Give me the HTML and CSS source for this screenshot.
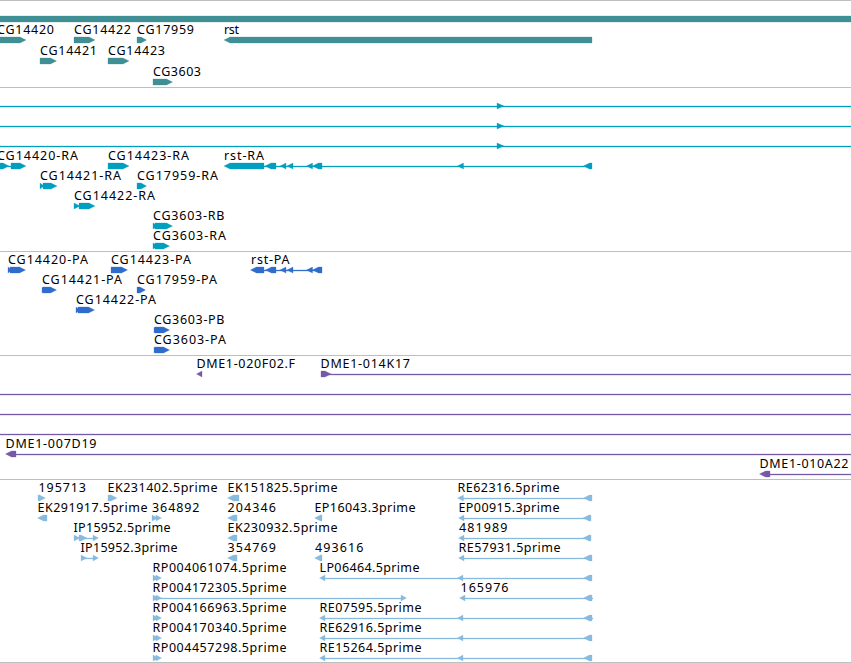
FILE: index.html
```html
<!DOCTYPE html>
<html lang="en">
<head>
    <meta charset="UTF-8">
    <meta name="viewport" content="width=device-width, initial-scale=1.0">
    <title>Genome Tracks</title>
    <link rel="stylesheet" href="styles.css">
</head>
<body>
    <main class="browser">
        <!-- Genes -->
        <section class="track genes">
            <svg width="851" height="86" viewBox="0 1 851 86">
                <path d="M0 16h851v6h-851z"/>
                <g transform="translate(0 37)">
                    <text x="-3" y="-3" textLength="57">CG14420</text>
                    <path d="M-5 0h25l6 3-6 3h-25z"/>
                    <text x="74" y="-3" textLength="57">CG14422</text>
                    <path d="M74 0h15l6 3-6 3h-15z"/>
                    <text x="137" y="-3" textLength="57">CG17959</text>
                    <path d="M137 0h4l5.500 3-5.500 3h-4z"/>
                    <text x="224" y="-3" textLength="15">rst</text>
                    <path d="M224 3l6-3h362v6h-362z"/>
                </g>
                <g transform="translate(0 58)">
                    <text x="40" y="-3" textLength="57">CG14421</text>
                    <path d="M40 0h10.500l6 3-6 3h-10.500z"/>
                    <text x="108" y="-3" textLength="57">CG14423</text>
                    <path d="M108 0h15l6 3-6 3h-15z"/>
                </g>
                <g transform="translate(0 79)">
                    <text x="153" y="-3" textLength="48">CG3603</text>
                    <path d="M153 0h13.500l6 3-6 3h-13.500z"/>
                </g>
            </svg>
        </section>

        <!-- Transcripts -->
        <section class="track transcripts">
            <svg width="851" height="163" viewBox="0 88 851 163">
                <path d="M0 106h851v1h-851zM497 103l7 3-7 3z"/>
                <path d="M0 126h851v1h-851zM497 123l7 3-7 3z"/>
                <path d="M0 146h851v1h-851zM497 143l7 3-7 3z"/>
                <g transform="translate(0 163)">
                    <text x="-3" y="-3" textLength="81">CG14420-RA</text>
                    <path d="M-5 0h8l6 3-6 3h-8zM8 3h4v1h-4zM11 0h9l6 3-6 3h-9z"/>
                    <text x="108" y="-3" textLength="81">CG14423-RA</text>
                    <path d="M108 0h15l6 3-6 3h-15z"/>
                    <text x="224" y="-3" textLength="40">rst-RA</text>
                    <path d="M224 3l6-3h34v6h-34zM265 3l6-3h5v6h-5zM280 3l6-3v6zM287 3l6-3v6zM306.500 3l6-3v6zM312.500 3l6-3h3.500v6h-3.500zM457.500 3l6-3v6zM583.500 3l6-3h2.500v6h-2.500zM264 3h326v1h-326z"/>
                </g>
                <g transform="translate(0 183)">
                    <text x="40" y="-3" textLength="81">CG14421-RA</text>
                    <path d="M40 0l4 3-4 3zM43 0h8l6 3-6 3h-8z"/>
                    <text x="137" y="-3" textLength="81">CG17959-RA</text>
                    <path d="M137 0h4l5.500 3-5.500 3h-4z"/>
                </g>
                <g transform="translate(0 203)">
                    <text x="74" y="-3" textLength="81">CG14422-RA</text>
                    <path d="M74 0l6 3-6 3zM79 0h10l6 3-6 3h-10z"/>
                </g>
                <g transform="translate(0 223)">
                    <text x="153" y="-3" textLength="71.500">CG3603-RB</text>
                    <path d="M153 0l5 3-5 3zM155 0h11.500l6 3-6 3h-11.500z"/>
                </g>
                <g transform="translate(0 243)">
                    <text x="153" y="-3" textLength="73">CG3603-RA</text>
                    <path d="M153 0l5 3-5 3zM155 0h8.500l6 3-6 3h-8.500z"/>
                </g>
            </svg>
        </section>

        <!-- Coding regions -->
        <section class="track proteins">
            <svg width="851" height="103" viewBox="0 252 851 103">
                <g transform="translate(0 267)">
                    <text x="8" y="-3" textLength="80">CG14420-PA</text>
                    <path d="M8 0l4 3-4 3zM10 0h9.500l6 3-6 3h-9.500z"/>
                    <text x="111" y="-3" textLength="80">CG14423-PA</text>
                    <path d="M111 0h10.500l6 3-6 3h-10.500z"/>
                    <text x="251" y="-3" textLength="38.500">rst-PA</text>
                    <path d="M250.500 3l6-3h7.500v6h-7.500zM265.500 3l6-3h4.500v6h-4.500zM280 3l6-3v6zM287 3l6-3v6zM306.500 3l6-3v6zM312.500 3l6-3h3.500v6h-3.500zM264 3h56v1h-56z"/>
                </g>
                <g transform="translate(0 287)">
                    <text x="42" y="-3" textLength="80">CG14421-PA</text>
                    <path d="M42 0l4 3-4 3zM43 0h7.500l6 3-6 3h-7.500z"/>
                    <text x="137" y="-3" textLength="80">CG17959-PA</text>
                    <path d="M137 0h3l5.500 3-5.500 3h-3z"/>
                </g>
                <g transform="translate(0 307)">
                    <text x="76" y="-3" textLength="80">CG14422-PA</text>
                    <path d="M76 0l4 3-4 3zM78 0h10.500l6 3-6 3h-10.500z"/>
                </g>
                <g transform="translate(0 327)">
                    <text x="154" y="-3" textLength="70.500">CG3603-PB</text>
                    <path d="M154 0l4 3-4 3zM155 0h8.500l6 3-6 3h-8.500z"/>
                </g>
                <g transform="translate(0 347)">
                    <text x="154" y="-3" textLength="72">CG3603-PA</text>
                    <path d="M154 0l4 3-4 3zM155 0h8.500l6 3-6 3h-8.500z"/>
                </g>
            </svg>
        </section>

        <!-- Insertions -->
        <section class="track insertions">
            <svg width="851" height="123" viewBox="0 356 851 123">
                <g transform="translate(0 371)">
                    <text x="196.500" y="-3" textLength="98.500">DME1-020F02.F</text>
                    <path d="M196.500 3l5.500-3v6z"/>
                    <text x="320.500" y="-3" textLength="89.500">DME1-014K17</text>
                    <path d="M321 0h4l6 3-6 3h-4zM325 3h526v1h-526z"/>
                </g>
                <path d="M0 394h851v1h-851zM0 414h851v1h-851zM0 434h851v1h-851z"/>
                <g transform="translate(0 451)">
                    <text x="5.500" y="-3" textLength="91">DME1-007D19</text>
                    <path d="M5.500 3l6-3h4.500v6h-4.500zM12 3h839v1h-839z"/>
                </g>
                <g transform="translate(0 471)">
                    <text x="759.500" y="-3" textLength="89">DME1-010A22</text>
                    <path d="M759.500 3l6-3h4.500v6h-4.500zM766 3h85v1h-85z"/>
                </g>
            </svg>
        </section>

        <!-- ESTs -->
        <section class="track ests">
            <svg width="851" height="182" viewBox="0 480 851 182">
                <g transform="translate(0 495)">
                    <text x="38.500" y="-3" textLength="47.500">195713</text>
                    <path d="M38 0h1.500l6 3-6 3h-1.500z"/>
                    <text x="107.500" y="-3" textLength="110">EK231402.5prime</text>
                    <path d="M108 0h3l6 3-6 3h-3z"/>
                    <text x="227.500" y="-3" textLength="110">EK151825.5prime</text>
                    <path d="M227.500 3l6-3h5.500v6h-5.500z"/>
                    <text x="457.500" y="-3" textLength="102">RE62316.5prime</text>
                    <path d="M457.500 3l6-3v6zM462 3h124v1h-124zM583.500 3l6-3h2.500v6h-2.500z"/>
                </g>
                <g transform="translate(0 515)">
                    <text x="37.500" y="-3" textLength="110">EK291917.5prime</text>
                    <path d="M37.500 3l6-3h3.500v6h-3.500z"/>
                    <text x="152" y="-3" textLength="47.500">364892</text>
                    <path d="M152 0l6 3-6 3zM156 0l5.500 3-5.500 3z"/>
                    <text x="227.500" y="-3" textLength="48.500">204346</text>
                    <path d="M227.500 3l6-3h3.500v6h-3.500z"/>
                    <text x="314.500" y="-3" textLength="101">EP16043.3prime</text>
                    <path d="M314.500 3l6-3h1.500v6h-1.500z"/>
                    <text x="458.500" y="-3" textLength="101">EP00915.3prime</text>
                    <path d="M458.500 3l5.500-3v6zM462 3h124v1h-124zM583 3l6-3h2v6h-2z"/>
                </g>
                <g transform="translate(0 535)">
                    <text x="73.500" y="-3" textLength="97">IP15952.5prime</text>
                    <path d="M74 0l6 3-6 3zM79 0h2l6 3-6 3h-2zM82 3h14v1h-14zM93 0l5.500 3-5.500 3z"/>
                    <text x="227.500" y="-3" textLength="110">EK230932.5prime</text>
                    <path d="M227.500 3l6-3h3.500v6h-3.500z"/>
                    <text x="459" y="-3" textLength="48.500">481989</text>
                    <path d="M458.500 3l5.500-3v6zM462 3h124v1h-124zM583 3l6-3h2v6h-2z"/>
                </g>
                <g transform="translate(0 555)">
                    <text x="80.500" y="-3" textLength="97">IP15952.3prime</text>
                    <path d="M81 0l6 3-6 3zM84 3h12v1h-12zM93 0l5.500 3-5.500 3z"/>
                    <text x="227.500" y="-3" textLength="48.500">354769</text>
                    <path d="M227.500 3l6-3h3.500v6h-3.500z"/>
                    <text x="315" y="-3" textLength="48.500">493616</text>
                    <path d="M314.500 3l6-3h1.500v6h-1.500z"/>
                    <text x="458.500" y="-3" textLength="102">RE57931.5prime</text>
                    <path d="M458.500 3l5.500-3v6zM462 3h124v1h-124zM583.500 3l6-3h2.500v6h-2.500z"/>
                </g>
                <g transform="translate(0 575)">
                    <text x="152.500" y="-3" textLength="134">RP004061074.5prime</text>
                    <path d="M153 0l6 3-6 3zM156 0l5.500 3-5.500 3z"/>
                    <text x="319.500" y="-3" textLength="100">LP06464.5prime</text>
                    <path d="M319.500 3l5.500-3v6zM323 3h263v1h-263zM457.500 3l5.500-3v6zM583.500 3l6-3h2.500v6h-2.500z"/>
                </g>
                <g transform="translate(0 595)">
                    <text x="152.500" y="-3" textLength="134">RP004172305.5prime</text>
                    <path d="M153 0l6 3-6 3zM156 0l5.500 3-5.500 3zM158 3h245v1h-245zM401 0l5.500 3-5.500 3z"/>
                    <text x="460.500" y="-3" textLength="48">165976</text>
                    <path d="M459.500 3l5.500-3v6zM463 3h130v1h-130zM583.500 3l6-3h2.500v6h-2.500z"/>
                </g>
                <g transform="translate(0 615)">
                    <text x="152.500" y="-3" textLength="134">RP004166963.5prime</text>
                    <path d="M153 0l6 3-6 3zM156 0l5.500 3-5.500 3z"/>
                    <text x="319.500" y="-3" textLength="102">RE07595.5prime</text>
                    <path d="M319.500 3l5.500-3v6zM323 3h270v1h-270zM457.500 3l5.500-3v6zM583.500 3l6-3h2.500v6h-2.500z"/>
                </g>
                <g transform="translate(0 635)">
                    <text x="152.500" y="-3" textLength="134">RP004170340.5prime</text>
                    <path d="M153 0l6 3-6 3zM156 0l5.500 3-5.500 3z"/>
                    <text x="319.500" y="-3" textLength="102">RE62916.5prime</text>
                    <path d="M319.500 3l5.500-3v6zM323 3h263v1h-263zM457.500 3l5.500-3v6zM583.500 3l6-3h2.500v6h-2.500z"/>
                </g>
                <g transform="translate(0 655)">
                    <text x="152.500" y="-3" textLength="134">RP004457298.5prime</text>
                    <path d="M153 0l6 3-6 3zM156 0l5.500 3-5.500 3z"/>
                    <text x="319.500" y="-3" textLength="102">RE15264.5prime</text>
                    <path d="M319.500 3l5.500-3v6zM323 3h263v1h-263zM457.500 3l5.500-3v6zM583.500 3l6-3h2.500v6h-2.500z"/>
                </g>
            </svg>
        </section>
    </main>
</body>
</html>
```
FILE: styles.css
```css
body {
    margin: 0;
    padding: 0;
    background-color: #fff;
    font-family: "Noto Sans", "DejaVu Sans", sans-serif;
    font-size: 12.5px;
    overflow: hidden;
}

.browser {
    display: flex;
    flex-direction: column;
    width: 851px;
    border-bottom: 1px solid #bebebe;
}

.track {
    border-top: 1px solid #bebebe;
}

.track svg {
    display: block;
}

.track text {
    fill: #000;
}

/* keeps the tips of the small arrowheads solid */
.track path {
    stroke-width: 0.3;
    stroke-linejoin: round;
}

.genes path {
    fill: #3f8f94;
    stroke: #3f8f94;
}

.transcripts path {
    fill: #009fbf;
    stroke: #009fbf;
}

.proteins path {
    fill: #306ccc;
    stroke: #306ccc;
}

.insertions path {
    fill: #7659a8;
    stroke: #7659a8;
}

.ests path {
    fill: #88bbdd;
    stroke: #88bbdd;
}
```
